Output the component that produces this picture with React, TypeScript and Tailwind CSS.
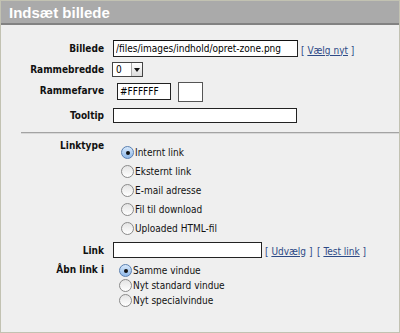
import React, { useState } from 'react';

const font = { fontFamily: '"DejaVu Sans Condensed", "DejaVu Sans", Verdana, sans-serif' };

const Radio: React.FC<{ checked: boolean; label: string; onClick: () => void }> = ({ checked, label, onClick }) => (
  <div className="flex items-center h-[19px] cursor-pointer" onClick={onClick}>
    <span
      className={`flex items-center justify-center w-[13px] h-[13px] rounded-full border ${
        checked ? 'border-[#5a7fb0] bg-gradient-to-b from-[#d6e8fb] to-[#8fb8e8]' : 'border-[#8a8a8a] bg-gradient-to-b from-[#e4e4e4] to-white'
      }`}
    >
      {checked && <span className="w-[4px] h-[4px] rounded-full bg-[#111]" />}
    </span>
    <span className="ml-[1px] text-[10px] text-[#111]">{label}</span>
  </div>
);

const Label: React.FC<{ children: React.ReactNode; className?: string }> = ({ children, className }) => (
  <div className={`w-[103px] shrink-0 text-right text-[10px] font-bold text-[#111] ${className || ''}`}>{children}</div>
);

const LinkBtn: React.FC<{ children: React.ReactNode }> = ({ children }) => (
  <span className="text-[10px] text-[#2d4a86]">
    [ <a className="underline cursor-pointer">{children}</a> ]
  </span>
);

const App: React.FC = () => {
  const [linkType, setLinkType] = useState('Internt link');
  const [target, setTarget] = useState('Samme vindue');

  const linkTypes = ['Internt link', 'Eksternt link', 'E-mail adresse', 'Fil til download', 'Uploaded HTML-fil'];
  const targets = ['Samme vindue', 'Nyt standard vindue', 'Nyt specialvindue'];

  return (
    <div className="w-[400px] h-[333px] bg-[#c2c2b2] p-[1px]" style={font}>
      <div className="flex flex-col w-full h-full bg-[#efefef]">
        {/* Header */}
        <div className="h-[24px] bg-[#aaaaaa] border-b-2 border-[#828282] flex items-center pl-[8px]">
          <span className="text-white font-bold text-[15px] leading-none" style={{ fontFamily: '"Liberation Sans", Arial, sans-serif' }}>
            Indsæt billede
          </span>
        </div>

        <div className="flex flex-col pt-[15px]">
          {/* Billede */}
          <div className="flex items-center h-[17px]">
            <Label>Billede</Label>
            <input
              className="ml-[9px] w-[185px] h-[17px] bg-white border border-[#222] border-t-[#111] text-[10px] px-[2px] outline-none"
              defaultValue="/files/images/indhold/opret-zone.png"
            />
            <span className="ml-[3px]">
              <LinkBtn>Vælg nyt</LinkBtn>
            </span>
          </div>

          {/* Rammebredde */}
          <div className="flex items-center h-[15px] mt-[5px]">
            <Label>Rammebredde</Label>
            <div className="ml-[8px] flex items-center w-[31px] h-[15px] bg-white border border-[#444]">
              <span className="flex-1 text-[10px] pl-[3px] leading-none">0</span>
              <span className="w-[11px] h-full flex items-center justify-center bg-gradient-to-b from-white to-[#dcdcdc] border-l border-[#aaa]">
                <svg width="6" height="4" viewBox="0 0 6 4">
                  <path d="M0 0 H6 L3 4 Z" fill="#111" />
                </svg>
              </span>
            </div>
          </div>

          {/* Rammefarve */}
          <div className="flex items-start mt-[5px]">
            <Label className="pt-[1px]">Rammefarve</Label>
            <input
              className="ml-[13px] mt-[1px] w-[54px] h-[17px] bg-white border border-[#222] text-[10px] px-[2px] outline-none"
              defaultValue="#FFFFFF"
            />
            <div className="ml-[7px] w-[25px] h-[20px] bg-white border border-[#555]" />
          </div>

          {/* Tooltip */}
          <div className="flex items-center h-[15px] mt-[6px]">
            <Label>Tooltip</Label>
            <input className="ml-[9px] w-[184px] h-[15px] bg-white border border-[#222] text-[10px] outline-none" />
          </div>

          {/* Divider */}
          <div className="ml-[20px] mt-[9px] h-[2px] border-t border-[#a3a3a3] border-b border-b-[#d8d8d8]" />

          {/* Linktype */}
          <div className="flex items-start mt-[3px]">
            <Label className="pt-[1px]">Linktype</Label>
            <div className="ml-[17px] flex flex-col pt-[6px]">
              {linkTypes.map((t) => (
                <Radio key={t} label={t} checked={linkType === t} onClick={() => setLinkType(t)} />
              ))}
            </div>
          </div>

          {/* Link */}
          <div className="flex items-center h-[16px] mt-[4px]">
            <Label>Link</Label>
            <input className="ml-[9px] w-[149px] h-[16px] bg-white border border-[#222] text-[10px] outline-none" />
            <span className="ml-[3px]">
              <LinkBtn>Udvælg</LinkBtn> <LinkBtn>Test link</LinkBtn>
            </span>
          </div>

          {/* Åbn link i */}
          <div className="flex items-start mt-[3px]">
            <Label className="pt-[1px] w-[101px]">Åbn link i</Label>
            <div className="ml-[15px] flex flex-col pt-[2px]">
              {targets.map((t) => (
                <div key={t} className="-my-[2px]">
                  <Radio label={t} checked={target === t} onClick={() => setTarget(t)} />
                </div>
              ))}
            </div>
          </div>
        </div>
      </div>
    </div>
  );
};

export default App;
